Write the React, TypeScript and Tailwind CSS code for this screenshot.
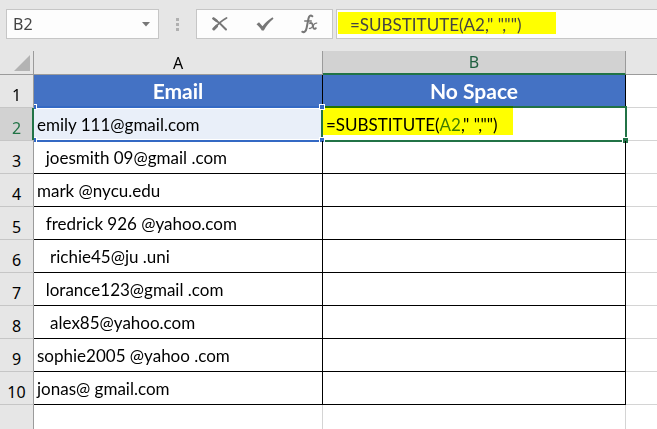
import React, { useState } from "react";

const EMAILS = [
  "emily 111@gmail.com",
  "  joesmith 09@gmail .com",
  "mark @nycu.edu",
  "  fredrick 926 @yahoo.com",
  "   richie45@ju .uni",
  "  lorance123@gmail .com",
  "   alex85@yahoo.com",
  "sophie2005 @yahoo .com",
  "jonas@ gmail.com",
];

const rowHead =
  "relative border-r border-b border-r-[#9b9b9b] border-b-[#c6c6c6] p-0 pt-2 text-center font-['Noto_Sans',sans-serif] text-base leading-6 font-normal";
const titleCell =
  "border-r border-b border-black bg-[#4472c4] p-0 text-center text-[21px] leading-8 font-bold text-white";
const bodyCell = "relative border-r border-b border-black p-0 pt-[2px] whitespace-pre";
const spareCell = "border-b border-[#d4d4d4] p-0";

function FormulaBar() {
  const [name, setName] = useState("B2");
  const [formula, setFormula] = useState('=SUBSTITUTE(A2," ","")');

  return (
    <div className="flex h-[51px] items-start pt-[9px] pl-[6px]">
      <div className="flex h-[30px] w-[153px] shrink-0 items-center border border-[#c6c6c6] bg-[#fdfdfd]">
        <input
          aria-label="Name box"
          value={name}
          onChange={(e) => setName(e.target.value)}
          className="h-full w-full min-w-0 bg-transparent pl-[6px] font-['Noto_Sans',sans-serif] text-base text-[#444] outline-none"
        />
        <button type="button" aria-label="Show names" className="flex h-full w-6 shrink-0 items-center justify-center">
          <svg width="8" height="5" viewBox="0 0 8 5" fill="#777">
            <path d="M0 0h8L4 4.5z" />
          </svg>
        </button>
      </div>

      <div className="flex h-[30px] w-[37px] shrink-0 flex-col items-center justify-center gap-[2px]">
        <span className="size-[3px] bg-[#b0b0b0]" />
        <span className="size-[3px] bg-[#b0b0b0]" />
        <span className="size-[3px] bg-[#b0b0b0]" />
      </div>

      <div className="flex h-[30px] w-[137px] shrink-0 items-center border border-[#c6c6c6] bg-[#fdfdfd] text-[#777]">
        <button type="button" aria-label="Cancel" className="flex h-full flex-1 items-center justify-center">
          <svg width="16" height="14" viewBox="0 0 16 14" fill="none" stroke="currentColor" strokeLinecap="round">
            <path d="M1.500 1.500C6 4.500 10 8 14 12.500" strokeWidth="2" />
            <path d="M14.500 1C9 4 5 8 1.800 12" strokeWidth="1.800" />
            <path d="M4.500 9.200 1.800 12" strokeWidth="3" />
            <path d="M1.500 1.500 4.500 3.800" strokeWidth="2.600" />
          </svg>
        </button>
        <button type="button" aria-label="Enter" className="flex h-full flex-1 items-center justify-center">
          <svg width="18" height="14" viewBox="0 0 18 14" fill="currentColor">
            <path d="M.5 7.200 3 5.200l3.500 4C9.500 5.500 12.500 2.800 16.500.3l1 1.500C13.500 5 10.500 8.500 7.800 13.500H5.800C4.500 11 2.700 9.200.5 7.200z" />
          </svg>
        </button>
        <button type="button" aria-label="Insert function" className="flex h-full flex-1 items-center justify-center">
          <svg width="17" height="20" viewBox="0 0 17 20" fill="none" stroke="currentColor" strokeLinecap="round">
            <path d="M11.300 2.300C9.500.7 8 2 7.500 4.500L5.600 14C5 17.300 3.200 19 1.300 17.700" strokeWidth="2" />
            <path d="M3.700 7h6.600" strokeWidth="1.400" />
            <path d="M9 9.200c1.600-.7 2.300 0 2.700 1.800l.6 2.600c.3 1.300 1.300 1.700 2.500.6" strokeWidth="1.900" />
            <path d="M15.700 9.200c-1.500-.4-2.700.9-3.700 2.700-1 1.800-2.100 3-3.600 2.500" strokeWidth="1.300" />
          </svg>
        </button>
      </div>

      <div className="ml-[3px] flex h-[30px] min-w-0 flex-1 items-start border-y border-l border-[#c6c6c6] bg-[#fdfdfd] pt-[2px] pl-px">
        <input
          aria-label="Formula bar"
          value={formula}
          onChange={(e) => setFormula(e.target.value)}
          className="h-[22px] w-[218px] bg-[#ffff00] pt-[2px] pl-3 font-[Lato,sans-serif] text-[17px] leading-5 text-[#444] outline-none"
        />
      </div>
    </div>
  );
}

export default function App() {
  return (
    <div className="min-h-screen overflow-hidden bg-[#e6e6e6] font-[Lato,sans-serif] text-[17px] leading-6 text-black">
      <FormulaBar />

      <table className="w-full table-fixed border-separate border-spacing-0 bg-white">
        <colgroup>
          <col className="w-[34px]" />
          <col className="w-[289px]" />
          <col className="w-[303px]" />
          <col />
        </colgroup>
        <thead className="bg-[#e6e6e6] font-['Noto_Sans',sans-serif] text-base">
          <tr className="h-6">
            <th className="border-r border-b border-[#9b9b9b] p-0">
              <svg className="mr-[3px] ml-auto" width="16" height="16" viewBox="0 0 16 16" fill="#b3b3b3">
                <path d="M16 0v16H0z" />
              </svg>
            </th>
            <th className="border-r border-b border-[#9b9b9b] p-0 leading-5 font-normal">A</th>
            <th className="border-r border-b-2 border-r-[#9b9b9b] border-b-[#217346] bg-[#d2d2d2] p-0 leading-5 font-normal text-[#1f6040]">
              B
            </th>
            <th className="border-b border-[#9b9b9b] p-0" />
          </tr>
        </thead>
        <tbody>
          <tr className="h-[33px]">
            <th className={`${rowHead} bg-[#e6e6e6]`}>1</th>
            <td className={titleCell}>Email</td>
            <td className={titleCell}>No Space</td>
            <td className={spareCell} />
          </tr>
          {EMAILS.map((email, i) => {
            const active = i === 0;
            return (
              <tr key={email} className="h-[33px]">
                <th className={active ? `${rowHead} bg-[#d2d2d2] text-[#217346]` : `${rowHead} bg-[#e6e6e6]`}>
                  {i + 2}
                  {active && <span className="absolute inset-y-0 -right-px w-[2px] bg-[#217346]" />}
                </th>
                <td className={active ? `${bodyCell} bg-[#e9eff9] pl-[3px]` : `${bodyCell} pl-[3px]`}>
                  {active && (
                    <>
                      {/* range reference outline */}
                      <span className="absolute inset-x-0 -top-[2px] h-[3px] border-t-2 border-[#3469c4] bg-white" />
                      <span className="absolute inset-x-0 -bottom-[2px] h-[3px] border-b-2 border-[#3469c4] bg-white" />
                      <span className="absolute -top-1 left-0 h-[6px] w-[3px] border-t border-r border-b border-white bg-[#3469c4]" />
                      <span className="absolute -bottom-[3px] left-0 h-[6px] w-[3px] border-t border-r border-b border-white bg-[#3469c4]" />
                    </>
                  )}
                  <span className="relative">{email}</span>
                </td>
                <td className={bodyCell}>
                  {active && (
                    <>
                      <span className="absolute -inset-x-[2px] -top-[2px] -bottom-[2px] border-2 border-[#217346]" />
                      <span className="absolute -top-[2px] left-0 h-[29px] w-[190px] bg-[#ffff00] mix-blend-multiply" />
                      <span className="relative pl-[3px]">
                        =SUBSTITUTE(<span className="text-[#3f7d00]">A2</span>," ","")
                      </span>
                      <span className="absolute -top-1 -left-1 size-[6px] border border-white bg-[#3469c4]" />
                      <span className="absolute -bottom-[3px] -left-1 size-[6px] border border-white bg-[#3469c4]" />
                      <span className="absolute -right-[3px] -bottom-[3px] size-[6px] border-t border-l border-white bg-[#217346]" />
                    </>
                  )}
                </td>
                <td className={spareCell} />
              </tr>
            );
          })}
          <tr className="h-6">
            <th className="border-r border-[#9b9b9b] bg-[#e6e6e6] p-0" />
            <td className="border-r border-[#d4d4d4] p-0" />
            <td className="border-r border-[#d4d4d4] p-0" />
            <td className="p-0" />
          </tr>
        </tbody>
      </table>
    </div>
  );
}
